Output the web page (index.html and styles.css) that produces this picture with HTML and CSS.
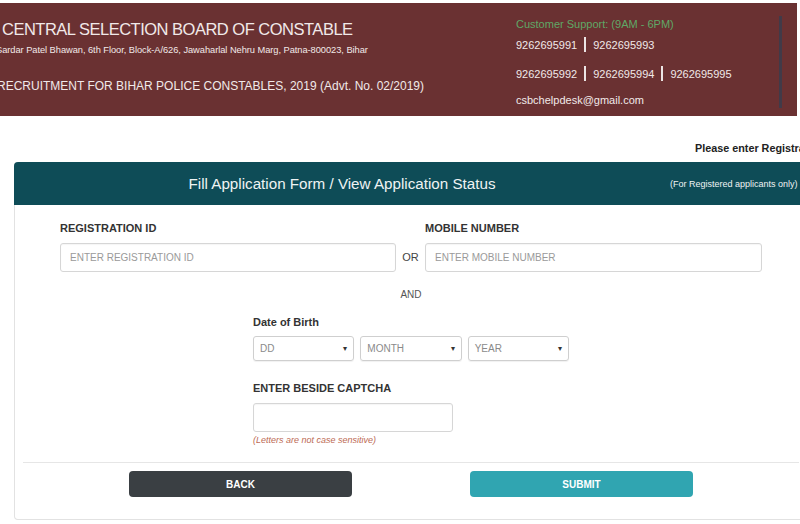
FILE: index.html
```html
<!DOCTYPE html>
<html lang="en">
<head>
<meta charset="utf-8">
<title>CSBC - Fill Application Form</title>
<link rel="stylesheet" href="styles.css">
</head>
<body>
<header class="topbar">
  <div class="brand">
    <div class="brand-title">CENTRAL SELECTION BOARD OF CONSTABLE</div>
    <div class="brand-address">Sardar Patel Bhawan, 6th Floor, Block-A/626, Jawaharlal Nehru Marg, Patna-800023, Bihar</div>
    <div class="brand-recruit">RECRUITMENT FOR BIHAR POLICE CONSTABLES, 2019 (Advt. No. 02/2019)</div>
  </div>
  <div class="support">
    <div class="support-title">Customer Support: (9AM - 6PM)</div>
    <div class="phones phones-1"><span>9262695991</span><i class="sep"></i><span>9262695993</span></div>
    <div class="phones phones-2"><span>9262695992</span><i class="sep"></i><span>9262695994</span><i class="sep"></i><span>9262695995</span></div>
    <div class="support-mail">csbchelpdesk@gmail.com</div>
  </div>
  <div class="topbar-edge"></div>
</header>

<p class="notice">Please enter Registration ID or Mobile Number and Date of Birth</p>

<section class="card">
  <div class="card-head">
    <h1 class="card-title">Fill Application Form / View Application Status</h1>
    <span class="card-note">(For Registered applicants only)</span>
  </div>
  <div class="card-body">
    <div class="id-row">
      <div class="field">
        <label class="label">REGISTRATION ID</label>
        <input class="text-input" type="text" placeholder="ENTER REGISTRATION ID">
      </div>
      <div class="or">OR</div>
      <div class="field">
        <label class="label">MOBILE NUMBER</label>
        <input class="text-input" type="text" placeholder="ENTER MOBILE NUMBER">
      </div>
    </div>
    <div class="and">AND</div>
    <div class="center-block">
      <label class="label">Date of Birth</label>
      <div class="dob">
        <div class="select"><span>DD</span><span class="caret">&#9662;</span></div>
        <div class="select"><span>MONTH</span><span class="caret">&#9662;</span></div>
        <div class="select"><span>YEAR</span><span class="caret">&#9662;</span></div>
      </div>
      <label class="label captcha-label">ENTER BESIDE CAPTCHA</label>
      <input class="text-input captcha-input" type="text">
      <div class="hint">(Letters are not case sensitive)</div>
    </div>
    <hr class="divider">
    <div class="actions">
      <button class="btn btn-back">BACK</button>
      <button class="btn btn-submit">SUBMIT</button>
    </div>
  </div>
</section>
</body>
</html>
```

FILE: styles.css
```css
html, body {
  margin: 0;
  padding: 0;
  overflow: hidden;
  background: #ffffff;
}
body {
  width: 800px;
  height: 524px;
  font-family: "Liberation Sans", Arial, sans-serif;
  color: #333;
}

/* ---------- top header ---------- */
.topbar {
  margin: 3px 3px 0 0;
  height: 113px;
  background: #6a3132;
  display: grid;
  grid-template-columns: 516px 1fr 3px;
  color: #f1e9e9;
  padding-right: 15px;
}
.brand {
  padding-top: 16px;
  overflow: hidden;
  white-space: nowrap;
}
.brand-title {
  font-size: 16.5px;
  line-height: 20px;
  letter-spacing: -0.5px;
  margin-left: 2px;
}
.brand-address {
  font-size: 9.3px;
  line-height: 12px;
  margin-top: 5px;
  margin-left: -4px;
  letter-spacing: -0.05px;
}
.brand-recruit {
  font-size: 12px;
  line-height: 16px;
  margin-top: 22px;
  margin-left: -3px;
}
.support {
  padding-top: 14px;
  font-size: 11px;
  white-space: nowrap;
}
.support-title {
  color: #5fa866;
  line-height: 14px;
}
.phones {
  display: flex;
  align-items: center;
  line-height: 14px;
}
.phones-1 { margin-top: 6px; }
.phones-2 { margin-top: 14px; }
.sep {
  display: inline-block;
  width: 2px;
  height: 15px;
  background: #ece4e4;
  margin: 0 7px;
}
.support-mail {
  margin-top: 12px;
  line-height: 14px;
}
.topbar-edge {
  margin-top: 13px;
  height: 92px;
  background: #413a48;
}

/* ---------- notice ---------- */
.notice {
  margin: 25px 0 0 0;
  padding-left: 695px;
  font-size: 10.8px;
  line-height: 14px;
  font-weight: bold;
  color: #222;
  white-space: nowrap;
  overflow: hidden;
}

/* ---------- card ---------- */
.card {
  margin: 7px 0 0 14px;
  width: 794px;
  border: 1px solid #e2e2e2;
  border-top: none;
  border-radius: 4px;
  box-sizing: border-box;
  background: #fff;
}
.card-head {
  height: 43px;
  background: #0e4c57;
  border-radius: 4px 4px 0 0;
  display: flex;
  align-items: center;
  color: #eef3f3;
  margin: 0 -1px;
}
.card-title {
  margin: 0;
  width: 656px;
  text-align: center;
  font-size: 15.2px;
  font-weight: normal;
}
.card-note {
  font-size: 9px;
  white-space: nowrap;
}
.card-body {
  padding: 16px 0 22px;
}
.id-row {
  display: grid;
  grid-template-columns: 336px 29px 337px;
  padding: 0 45px;
  align-items: end;
}
.field {
  display: flex;
  flex-direction: column;
}
.label {
  display: block;
  font-size: 11px;
  line-height: 14px;
  font-weight: bold;
  color: #333;
  margin-bottom: 8px;
}
.text-input {
  box-sizing: border-box;
  height: 29px;
  border: 1px solid #d6d6d6;
  border-radius: 3px;
  padding: 0 9px;
  font-family: "Liberation Sans", Arial, sans-serif;
  font-size: 10px;
  box-shadow: inset 0 1px 1px rgba(0,0,0,0.04);
  background: #fff;
}
.text-input::placeholder {
  color: #9a9a9a;
}
.or {
  height: 29px;
  line-height: 29px;
  font-size: 11px;
  color: #444;
  text-align: center;
}
.and {
  text-align: center;
  font-size: 10px;
  line-height: 14px;
  color: #555;
  margin-top: 16px;
}
.center-block {
  width: 316px;
  margin: 13px auto 0;
}
.dob {
  display: flex;
  gap: 6px;
  margin-top: -1px;
}
.select {
  box-sizing: border-box;
  width: 102px;
  height: 25px;
  border: 1px solid #cfcfcf;
  border-radius: 3px;
  display: flex;
  align-items: center;
  justify-content: space-between;
  padding: 0 6px 0 6px;
  font-size: 10px;
  color: #8a8a8a;
  box-shadow: 0 1px 1px rgba(0,0,0,0.06);
}
.caret {
  color: #333;
  font-size: 8px;
}
.captcha-label {
  margin-top: 20px;
}
.captcha-input {
  width: 200px;
  display: block;
}
.hint {
  margin-top: 2px;
  font-size: 9px;
  line-height: 12px;
  font-style: italic;
  color: #bd6a55;
}
.divider {
  border: none;
  border-top: 1px solid #e6e6e6;
  margin: 16px 8px 0;
}
.actions {
  display: flex;
  justify-content: center;
  gap: 118px;
  margin-top: 8px;
}
.btn {
  width: 223px;
  height: 26px;
  border: none;
  border-radius: 4px;
  color: #fff;
  font-family: "Liberation Sans", Arial, sans-serif;
  font-weight: bold;
  font-size: 10px;
}
.btn-back {
  background: #3a3f43;
}
.btn-submit {
  background: #30a5b1;
}
```
